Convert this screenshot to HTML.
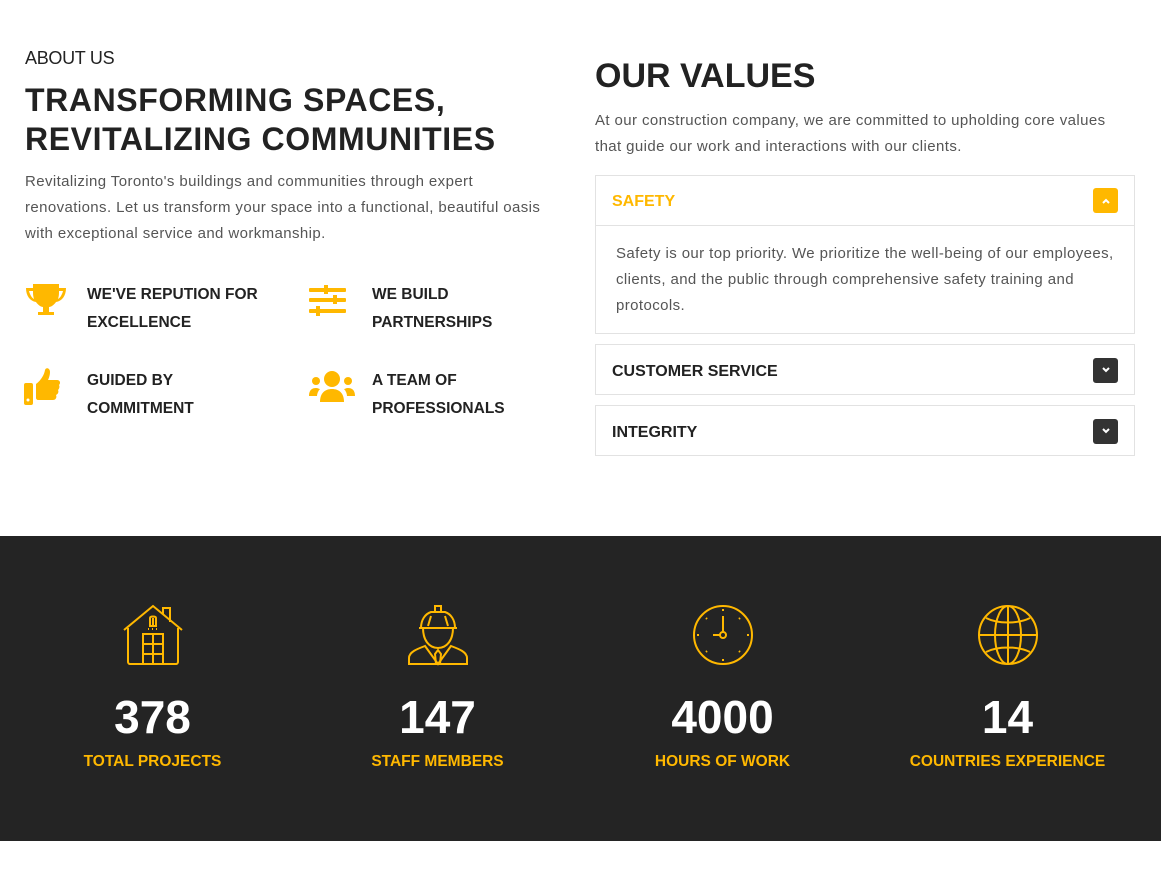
<!DOCTYPE html>
<html><head><style>
*{margin:0;padding:0;box-sizing:border-box}
body{width:1161px;height:871px;background:#fff;font-family:"Liberation Sans",sans-serif;color:#222;position:relative;overflow:hidden}
.abs{position:absolute}
.y{color:#ffb800}
.feat{font-weight:bold;font-size:15.5px;line-height:28px;color:#222}
.acc{position:absolute;left:595px;width:540px;border:1px solid #e2e2e2}
.acc .h{height:50px;padding:3px 16px 0;display:flex;align-items:center;justify-content:space-between;font-weight:bold;font-size:16px}
.btn{width:25px;height:25px;border-radius:3px;background:#333;display:flex;align-items:center;justify-content:center;margin-top:-3px}
.stat{position:absolute;top:536px;width:285px;text-align:center}
.num{position:absolute;top:154px;width:285px;font-size:46px;font-weight:bold;color:#fff}
.lab{position:absolute;top:217px;width:285px;font-size:15.5px;font-weight:bold;color:#ffb800}
.ic{position:absolute;top:68px;left:112px}
.p{font-size:15px;line-height:26px;color:#555;white-space:nowrap;letter-spacing:0.4px}
</style></head><body>
<div class="abs" style="left:25px;top:48px;font-size:18px;color:#222;letter-spacing:-0.3px">ABOUT US</div>
<div class="abs" style="left:25px;top:81px;font-size:32px;font-weight:bold;line-height:39px;letter-spacing:0.6px">TRANSFORMING SPACES,<br>REVITALIZING COMMUNITIES</div>
<div class="abs p" style="left:25px;top:169px">Revitalizing Toronto's buildings and communities through expert<br>renovations. Let us transform your space into a functional, beautiful oasis<br>with exceptional service and workmanship.</div>

<svg class="abs" style="left:25px;top:283px" width="42" height="38" viewBox="0 0 42 38"><path fill="#ffb800" d="M8 1h26v4h7c0 8-4 13-10 14-2 3-5 5-7 5v5h5v3h-16v-3h5v-5c-2 0-5-2-7-5C5 18 1 13 1 5h7zM4 8c1 4 3 7 5 8-1-3-1-5-1-8zM38 8h-4c0 3 0 5-1 8 2-1 4-4 5-8z"/></svg>
<div class="abs feat" style="left:87px;top:281px">WE'VE REPUTION FOR<br>EXCELLENCE</div>
<svg class="abs" style="left:309px;top:285px" width="38" height="34" viewBox="0 0 38 34"><g fill="#ffb800"><rect x="0" y="3" width="37" height="4" rx="1"/><rect x="15" y="0" width="4" height="9"/><rect x="0" y="13" width="37" height="4" rx="1"/><rect x="24" y="10" width="4" height="9"/><rect x="0" y="24" width="37" height="4" rx="1"/><rect x="7" y="21" width="4" height="10"/></g></svg>
<div class="abs feat" style="left:372px;top:281px">WE BUILD<br>PARTNERSHIPS</div>
<svg class="abs" style="left:24px;top:368px" width="40" height="38" viewBox="0 0 40 38"><g fill="#ffb800"><rect x="0" y="15" width="9" height="22" rx="2"/><path d="M12 16c4-3 8-8 9-14 1-3 5-2 5 2 0 4-2 8-2 8h9c3 0 4 3 2 5 1 2 0 4-1 5 1 2 0 4-2 5 1 2 0 5-3 5H14c-1 0-2-1-2-2z"/></g><circle cx="4" cy="32" r="1.5" fill="#fff"/></svg>
<div class="abs feat" style="left:87px;top:367px">GUIDED BY<br>COMMITMENT</div>
<svg class="abs" style="left:309px;top:370px" width="46" height="34" viewBox="0 0 46 34"><g fill="#ffb800"><circle cx="23" cy="9" r="8"/><circle cx="7" cy="11" r="4"/><circle cx="39" cy="11" r="4"/><path d="M11 32c0-9 5-13 12-13s12 4 12 13z"/><path d="M0 26c0-6 3-8 7-8 2 0 3 1 4 1-2 2-3 5-3 7z"/><path d="M46 26c0-6-3-8-7-8-2 0-3 1-4 1 2 2 3 5 3 7z"/></g></svg>
<div class="abs feat" style="left:372px;top:367px">A TEAM OF<br>PROFESSIONALS</div>

<div class="abs" style="left:595px;top:57px;font-size:34px;font-weight:bold">OUR VALUES</div>
<div class="abs p" style="left:595px;top:108px">At our construction company, we are committed to upholding core values<br>that guide our work and interactions with our clients.</div>

<div class="acc" style="top:175px;height:159px">
<div class="h y" style="border-bottom:1px solid #e2e2e2">SAFETY<div class="btn" style="background:#ffb800"><svg width="10" height="8" viewBox="0 0 10 8"><path d="M2 6l3-3 3 3" stroke="#fff" stroke-width="2" fill="none"/></svg></div></div>
<div class="p" style="padding:15px 20px 0">Safety is our top priority. We prioritize the well-being of our employees,<br>clients, and the public through comprehensive safety training and<br>protocols.</div>
</div>
<div class="acc" style="top:344px;height:51px"><div class="h">CUSTOMER SERVICE<div class="btn"><svg width="10" height="8" viewBox="0 0 10 8"><path d="M2 2l3 3 3-3" stroke="#fff" stroke-width="2" fill="none"/></svg></div></div></div>
<div class="acc" style="top:405px;height:51px"><div class="h">INTEGRITY<div class="btn"><svg width="10" height="8" viewBox="0 0 10 8"><path d="M2 2l3 3 3-3" stroke="#fff" stroke-width="2" fill="none"/></svg></div></div></div>

<div class="abs" style="left:0;top:536px;width:1161px;height:305px;background:#242424"></div>

<div class="stat" style="left:10px">
<svg class="ic" width="62" height="62" viewBox="0 0 62 62" fill="none" stroke="#ffb800" stroke-width="2"><path d="M2 26L31 2l29 24M6 24v34c0 1 1 2 2 2h46c1 0 2-1 2-2V24M41 10V4h7v14"/><rect x="21" y="30" width="20" height="30"/><path d="M31 30v30M21 40h20M21 50h20"/><path d="M28 22v-8c0-2 6-2 6 0v8z M31 14v8"/><path d="M26 25h1M30 25h1M34 25h1"/></svg>
<div class="num">378</div><div class="lab">TOTAL PROJECTS</div></div>
<div class="stat" style="left:295px">
<svg class="ic" width="62" height="62" viewBox="0 0 62 62" fill="none" stroke="#ffb800" stroke-width="2"><path d="M12 24h38M14 24c0-8 4-14 10-16h14c6 2 10 8 10 16M28 8V2h6v6M24 12l-3 10M38 12l3 10"/><path d="M16 24c0 12 6 20 15 20s15-8 15-20"/><path d="M2 60v-6c0-6 8-9 16-12l13 18 13-18c8 3 16 6 16 12v6z"/><path d="M28 50l3-4 3 4-1 10h-4z"/></svg>
<div class="num">147</div><div class="lab">STAFF MEMBERS</div></div>
<div class="stat" style="left:580px">
<svg class="ic" width="62" height="62" viewBox="0 0 62 62" fill="none" stroke="#ffb800" stroke-width="2"><circle cx="31" cy="31" r="29"/><circle cx="31" cy="31" r="3"/><path d="M31 28V12M28 31h-7M31 5v2M31 55v2M5 31h2M55 31h2M14 14l1 1M48 14l-1 1M14 48l1-1M48 48l-1-1"/></svg>
<div class="num">4000</div><div class="lab">HOURS OF WORK</div></div>
<div class="stat" style="left:865px">
<svg class="ic" width="62" height="62" viewBox="0 0 62 62" fill="none" stroke="#ffb800" stroke-width="2"><circle cx="31" cy="31" r="29"/><ellipse cx="31" cy="31" rx="13" ry="29"/><path d="M2 31h58M31 2v58M9 14c12 6 32 6 44 0M9 48c12-6 32-6 44 0"/></svg>
<div class="num">14</div><div class="lab">COUNTRIES EXPERIENCE</div></div>
</body></html>
